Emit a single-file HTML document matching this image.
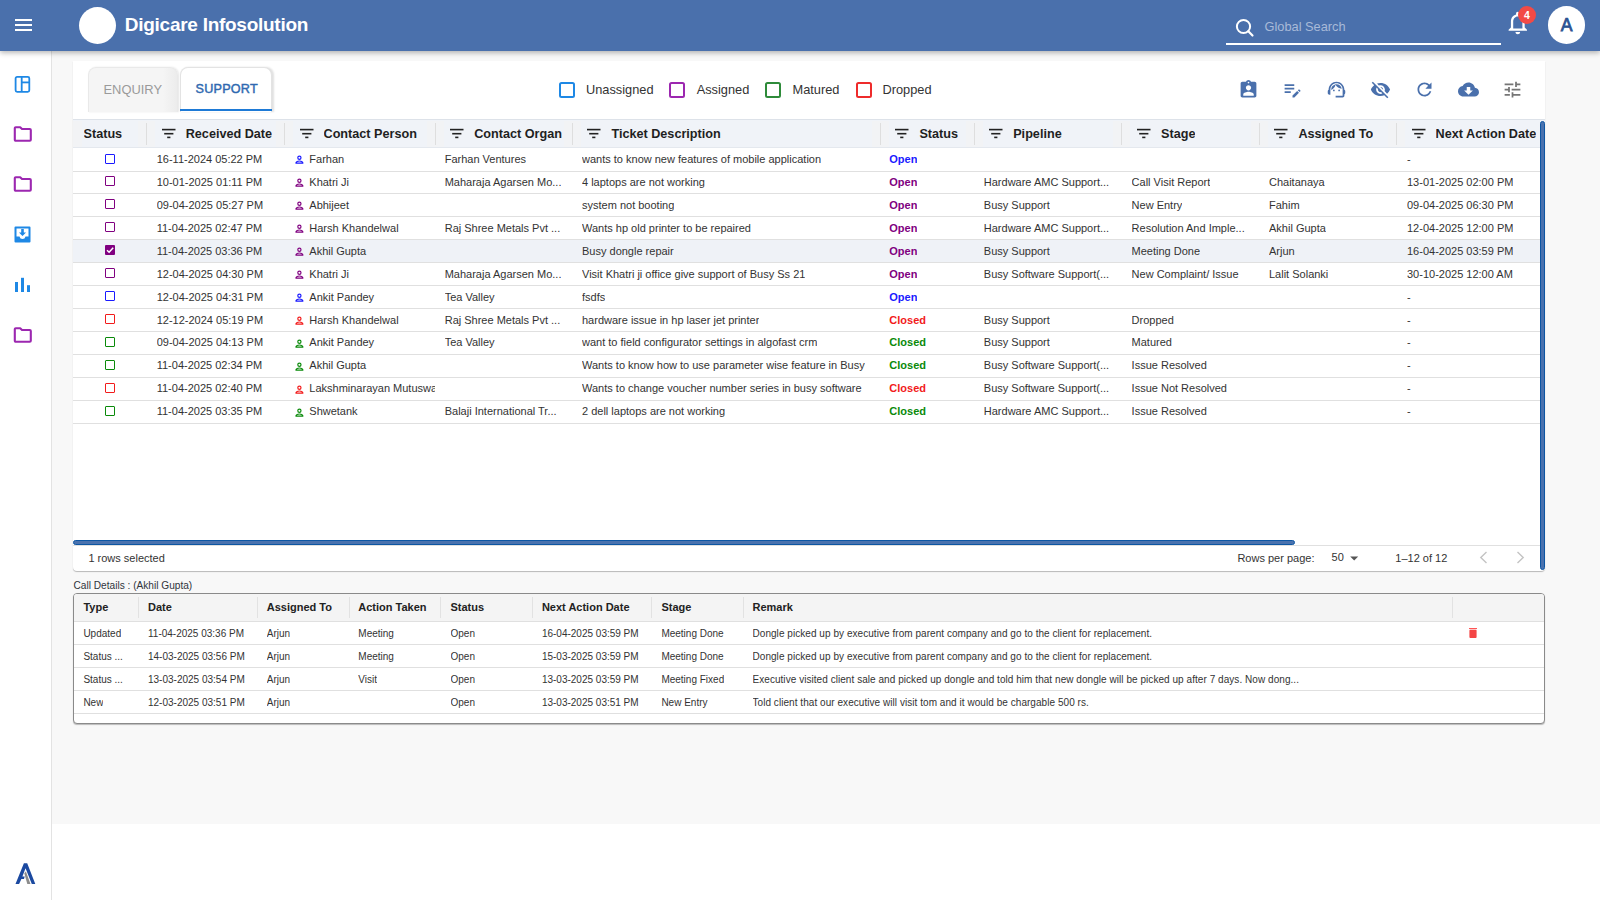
<!DOCTYPE html>
<html><head><meta charset="utf-8"><style>
*{box-sizing:border-box;margin:0;padding:0}
html,body{width:1600px;height:900px;overflow:hidden;background:#fff;font-family:"Liberation Sans",sans-serif;color:#333}
.a{position:absolute}
#hdr{position:absolute;left:0;top:0;width:1600px;height:51px;background:#4a70ac;box-shadow:0 2px 5px rgba(0,0,0,.28);z-index:10}
#side{position:absolute;left:0;top:0;width:52px;height:900px;background:#fff;border-right:1px solid #e3e3e3;z-index:5}
#main{position:absolute;left:52px;top:50px;width:1548px;height:773.5px;background:#f8f8f8}
#panel{position:absolute;left:73px;top:61px;width:1472px;height:510px;background:#fff;border-radius:0 0 4px 4px;box-shadow:0 1px 1px rgba(0,0,0,.26)}
.c{position:absolute;white-space:nowrap;overflow:hidden;font-size:11px;color:#333;line-height:23px;height:23px}
.h{position:absolute;white-space:nowrap;overflow:hidden;font-size:12.65px;font-weight:700;color:#1f1f1f;line-height:28px;height:28px;top:0}
.row{position:absolute;left:0;width:1468px;height:23px;border-bottom:1px solid #e0e0e0}
.dc{position:absolute;white-space:nowrap;overflow:hidden;font-size:10px;color:#333;line-height:23px;height:23px}
.dh{position:absolute;white-space:nowrap;font-size:11px;font-weight:700;color:#222;line-height:27px;top:0}
.drow{position:absolute;left:0;width:1470px;height:23px;border-bottom:1px solid #e0e0e0}
</style></head><body>
<div id="main"></div>
<div id="side"><svg class="a" style="left:13px;top:75px" width="18" height="18" viewBox="0 0 18 18"><rect x="2.6" y="1.9" width="13.7" height="14.9" rx="1.5" fill="none" stroke="#1e88e5" stroke-width="1.8"/><line x1="8.7" y1="1.9" x2="8.7" y2="16.8" stroke="#1e88e5" stroke-width="1.8"/><line x1="8.7" y1="7.4" x2="16.3" y2="7.4" stroke="#1e88e5" stroke-width="1.8"/></svg><svg class="a" style="left:13px;top:126px" width="20" height="16" viewBox="0 0 20 16"><path d="M1.8 2.2 Q1.8 1.2 2.8 1.2 H7.2 L9 3 H16.8 Q17.8 3 17.8 4 V13.8 Q17.8 14.8 16.8 14.8 H2.8 Q1.8 14.8 1.8 13.8 Z" fill="none" stroke="#9c27b0" stroke-width="2.1" stroke-linejoin="round"/></svg><svg class="a" style="left:13px;top:176px" width="20" height="16" viewBox="0 0 20 16"><path d="M1.8 2.2 Q1.8 1.2 2.8 1.2 H7.2 L9 3 H16.8 Q17.8 3 17.8 4 V13.8 Q17.8 14.8 16.8 14.8 H2.8 Q1.8 14.8 1.8 13.8 Z" fill="none" stroke="#9c27b0" stroke-width="2.1" stroke-linejoin="round"/></svg><svg class="a" style="left:14px;top:226px" width="17" height="17" viewBox="0 0 17 17"><path d="M1.5 0.5 H15.5 Q16.5 0.5 16.5 1.5 V15.5 Q16.5 16.5 15.5 16.5 H1.5 Q0.5 16.5 0.5 15.5 V1.5 Q0.5 0.5 1.5 0.5 Z M2.5 2.5 V10.5 H5.5 Q6 13 8.5 13 Q11 13 11.5 10.5 H14.5 V2.5 Z" fill="#1e88e5" fill-rule="evenodd"/><path d="M7.2 3 H9.8 V6.5 H12 L8.5 10 L5 6.5 H7.2 Z" fill="#1e88e5"/></svg><svg class="a" style="left:14px;top:277px" width="17" height="16" viewBox="0 0 17 16"><rect x="1" y="5" width="3" height="10" fill="#1e88e5"/><rect x="7" y="0.8" width="3" height="14.2" fill="#1e88e5"/><rect x="13" y="8.2" width="3" height="6.8" fill="#1e88e5"/></svg><svg class="a" style="left:13px;top:327px" width="20" height="16" viewBox="0 0 20 16"><path d="M1.8 2.2 Q1.8 1.2 2.8 1.2 H7.2 L9 3 H16.8 Q17.8 3 17.8 4 V13.8 Q17.8 14.8 16.8 14.8 H2.8 Q1.8 14.8 1.8 13.8 Z" fill="none" stroke="#9c27b0" stroke-width="2.1" stroke-linejoin="round"/></svg><svg class="a" style="left:14px;top:862px" width="23" height="23" viewBox="0 0 23 23"><path d="M1.5 22 L9.9 1.3 H13.2 L21.3 22 H17.8 L11.55 6.2 L8.4 14.4 H10.7 L10 16.9 H7.4 L5.1 22 Z" fill="#1b49a0"/><path d="M10.3 11.2 L11.9 9.4 L16.5 22 H13.3 Z" fill="#8c8c8c"/></svg></div>
<div id="hdr"><div class="a" style="left:15px;top:19px;width:17px;height:2px;background:#fff"></div><div class="a" style="left:15px;top:23.5px;width:17px;height:2px;background:#fff"></div><div class="a" style="left:15px;top:28.5px;width:17px;height:2px;background:#fff"></div><div class="a" style="left:78.5px;top:6.5px;width:37px;height:37px;border-radius:50%;background:#fff"></div><div class="a" style="left:124.8px;top:14.3px;font-size:19px;letter-spacing:-0.27px;font-weight:700;color:#fff;line-height:22px;white-space:nowrap">Digicare Infosolution</div><svg class="a" style="left:1234px;top:17px" width="21" height="21" viewBox="0 0 21 21"><circle cx="9.5" cy="9.5" r="6.6" fill="none" stroke="#fff" stroke-width="2"/><line x1="14.3" y1="14.3" x2="18.5" y2="18.5" stroke="#fff" stroke-width="2.2" stroke-linecap="round"/></svg><div class="a" style="left:1264.5px;top:18.7px;font-size:12.8px;color:#a8bad8;line-height:16px;white-space:nowrap">Global Search</div><div class="a" style="left:1226px;top:43px;width:275px;height:2px;background:#fff"></div><svg class="a" style="left:1503.6px;top:8.6px" width="27.6" height="27.6" viewBox="0 0 24 24"><path d="M12 22c1.1 0 2-.9 2-2h-4c0 1.1.9 2 2 2zm6-6v-5c0-3.07-1.63-5.64-4.5-6.32V4c0-.83-.67-1.5-1.5-1.5s-1.5.67-1.5 1.5v.68C7.64 5.36 6 7.92 6 11v5l-2 2v1h16v-1l-2-2zm-2 1H8v-6c0-2.48 1.51-4.5 4-4.5s4 2.02 4 4.5v6z" fill="#fff"/></svg><div class="a" style="left:1517.9px;top:6.3px;width:18px;height:18px;border-radius:50%;background:#f24a46;color:#fff;font-size:10.5px;font-weight:700;text-align:center;line-height:18px">4</div><div class="a" style="left:1547.9px;top:6px;width:37.5px;height:37.5px;border-radius:50%;background:#fff"></div><div class="a" style="left:1547.9px;top:14.6px;width:37.5px;font-size:17.6px;font-weight:400;-webkit-text-stroke:0.75px #2c5292;color:#2c5292;text-align:center;line-height:20px">A</div></div>
<div id="panel"><div class="a" style="left:15px;top:6px;width:90px;height:45px;background:linear-gradient(to right,#f5f5f5 0,#f5f5f5 84%,#ececec 100%);border:1px solid #e9e9e9;border-bottom:none;border-radius:8px 8px 0 0;box-shadow:1px 0 2px rgba(0,0,0,.10)"></div><div class="a" style="left:30.5px;top:21px;font-size:12.9px;color:#9a9a9a;line-height:16px;white-space:nowrap">ENQUIRY</div><div class="a" style="left:106.5px;top:6px;width:92px;height:45px;background:#fff;border:1px solid #e3e3e3;border-bottom:none;border-radius:8px 8px 0 0;box-shadow:1.5px 0 2px rgba(0,0,0,.12)"></div><div class="a" style="left:106.5px;top:48px;width:92px;height:2px;background:#1e7ad6"></div><div class="a" style="left:122.5px;top:20px;font-size:12.6px;font-weight:400;-webkit-text-stroke:0.45px #2f69b0;color:#2f69b0;line-height:16px;white-space:nowrap;letter-spacing:0.25px">SUPPORT</div><div class="a" style="left:485.5px;top:20.8px;width:16px;height:16px;border:2px solid #1e88e5;border-radius:2.5px"></div><div class="a" style="left:513px;top:21px;font-size:12.8px;color:#333;line-height:16px;white-space:nowrap">Unassigned</div><div class="a" style="left:596px;top:20.8px;width:16px;height:16px;border:2px solid #9c27b0;border-radius:2.5px"></div><div class="a" style="left:623.7px;top:21px;font-size:12.8px;color:#333;line-height:16px;white-space:nowrap">Assigned</div><div class="a" style="left:692px;top:20.8px;width:16px;height:16px;border:2px solid #2e8b3a;border-radius:2.5px"></div><div class="a" style="left:719.5px;top:21px;font-size:12.8px;color:#333;line-height:16px;white-space:nowrap">Matured</div><div class="a" style="left:782.5px;top:20.8px;width:16px;height:16px;border:2px solid #ee2b2b;border-radius:2.5px"></div><div class="a" style="left:809.5px;top:21px;font-size:12.8px;color:#333;line-height:16px;white-space:nowrap">Dropped</div><svg class="a" style="left:1164.5px;top:17.799999999999997px" width="21" height="21" viewBox="0 0 24 24"><path d="M19 3h-4.18C14.4 1.84 13.3 1 12 1c-1.3 0-2.4.84-2.82 2H5c-1.1 0-2 .9-2 2v14c0 1.1.9 2 2 2h14c1.1 0 2-.9 2-2V5c0-1.1-.9-2-2-2zm-7 0c.55 0 1 .45 1 1s-.45 1-1 1-1-.45-1-1 .45-1 1-1zm0 4c1.66 0 3 1.34 3 3s-1.34 3-3 3-3-1.34-3-3 1.34-3 3-3zm6 12H6v-1.4c0-2 4-3.1 6-3.1s6 1.1 6 3.1V19z" fill="#4a70ac"/></svg><svg class="a" style="left:1208.5px;top:17.799999999999997px" width="21" height="21" viewBox="0 0 24 24"><path d="M3 10h11v2H3v-2zm0-2h11V6H3v2zm0 8h7v-2H3v2zm15.01-3.13.71-.71c.39-.39 1.02-.39 1.41 0l.71.71c.39.39.39 1.02 0 1.41l-.71.71-2.12-2.12zm-.71.71-5.3 5.3V21h2.12l5.3-5.3-2.12-2.12z" fill="#4a70ac"/></svg><svg class="a" style="left:1252.5px;top:17.799999999999997px" width="21" height="21" viewBox="0 0 24 24"><path d="M21 12.22C21 6.73 16.74 3 12 3c-4.69 0-9 3.65-9 9.28-.6.34-1 .98-1 1.72v2c0 1.1.9 2 2 2h1v-6.1c0-3.87 3.13-7 7-7s7 3.13 7 7V19h-8v2h8c1.1 0 2-.9 2-2v-1.22c.59-.31 1-.92 1-1.64v-2.3c0-.7-.41-1.31-1-1.62zM9 14a1 1 0 1 0 0-2 1 1 0 0 0 0 2zm6 0a1 1 0 1 0 0-2 1 1 0 0 0 0 2zM18 11.03C17.52 8.18 15.04 6 12.05 6c-3.03 0-6.29 2.51-6.03 6.45 2.47-1.01 4.33-3.21 4.86-5.89 1.31 2.63 4 4.44 7.12 4.47z" fill="#4a70ac"/></svg><svg class="a" style="left:1296.5px;top:17.799999999999997px" width="21" height="21" viewBox="0 0 24 24"><path d="M12 7c2.76 0 5 2.24 5 5 0 .65-.13 1.26-.36 1.83l2.92 2.92c1.51-1.26 2.7-2.89 3.43-4.75-1.73-4.39-6-7.5-11-7.5-1.4 0-2.74.25-3.98.7l2.16 2.16C10.74 7.13 11.35 7 12 7zM2 4.27l2.28 2.28.46.46C3.08 8.3 1.78 10.02 1 12c1.73 4.39 6 7.5 11 7.5 1.55 0 3.03-.3 4.38-.84l.42.42L19.73 22 21 20.73 3.27 3 2 4.27zM7.53 9.8l1.55 1.55c-.05.21-.08.43-.08.65 0 1.66 1.34 3 3 3 .22 0 .44-.03.65-.08l1.55 1.55c-.67.33-1.41.53-2.2.53-2.76 0-5-2.24-5-5 0-.79.2-1.53.53-2.2zm4.31-.78l3.15 3.15.02-.16c0-1.66-1.34-3-3-3l-.17.01z" fill="#4a70ac"/></svg><svg class="a" style="left:1340.5px;top:17.799999999999997px" width="21" height="21" viewBox="0 0 24 24"><path d="M17.65 6.35C16.2 4.9 14.21 4 12 4c-4.42 0-7.99 3.58-7.99 8s3.57 8 7.99 8c3.73 0 6.84-2.55 7.73-6h-2.08c-.82 2.33-3.04 4-5.65 4-3.31 0-6-2.69-6-6s2.69-6 6-6c1.66 0 3.14.69 4.22 1.78L13 11h7V4l-2.35 2.35z" fill="#4a70ac"/></svg><svg class="a" style="left:1384.5px;top:17.799999999999997px" width="21" height="21" viewBox="0 0 24 24"><path d="M19.35 10.04C18.67 6.59 15.64 4 12 4 9.11 4 6.6 5.64 5.35 8.04 2.34 8.36 0 10.91 0 14c0 3.31 2.69 6 6 6h13c2.76 0 5-2.24 5-5 0-2.64-2.05-4.78-4.65-4.96zM17 13l-5 5-5-5h3V9h4v4h3z" fill="#4a70ac"/></svg><svg class="a" style="left:1428.5px;top:17.799999999999997px" width="21" height="21" viewBox="0 0 24 24"><path d="M3 17v2h6v-2H3zM3 5v2h10V5H3zm10 16v-2h8v-2h-8v-2h-2v6h2zM7 9v2H3v2h4v2h2V9H7zm14 4v-2H11v2h10zm-6-4h2V7h4V5h-4V3h-2v6z" fill="#757575"/></svg><div class="a" style="left:0;top:58px;width:1472px;height:28.5px;background:#f0f3f8;border-top:1.5px solid #dde2e9;border-bottom:1px solid #e4e8ee"></div><div class="a" style="left:0;top:59.5px;width:9px;height:26px;background:#f2f3f5"></div><div class="a" style="left:65.0px;top:59.5px;width:17px;height:26px;background:#f2f3f5"></div><div class="a" style="left:73.0px;top:62px;width:1px;height:22px;background:#dedede"></div><div class="a" style="left:202.8px;top:59.5px;width:17px;height:26px;background:#f2f3f5"></div><div class="a" style="left:210.8px;top:62px;width:1px;height:22px;background:#dedede"></div><div class="a" style="left:353.5px;top:59.5px;width:17px;height:26px;background:#f2f3f5"></div><div class="a" style="left:361.5px;top:62px;width:1px;height:22px;background:#dedede"></div><div class="a" style="left:490.70000000000005px;top:59.5px;width:17px;height:26px;background:#f2f3f5"></div><div class="a" style="left:498.70000000000005px;top:62px;width:1px;height:22px;background:#dedede"></div><div class="a" style="left:798.7px;top:59.5px;width:17px;height:26px;background:#f2f3f5"></div><div class="a" style="left:806.7px;top:62px;width:1px;height:22px;background:#dedede"></div><div class="a" style="left:892.5px;top:59.5px;width:17px;height:26px;background:#f2f3f5"></div><div class="a" style="left:900.5px;top:62px;width:1px;height:22px;background:#dedede"></div><div class="a" style="left:1040.3px;top:59.5px;width:17px;height:26px;background:#f2f3f5"></div><div class="a" style="left:1048.3px;top:62px;width:1px;height:22px;background:#dedede"></div><div class="a" style="left:1177.7px;top:59.5px;width:17px;height:26px;background:#f2f3f5"></div><div class="a" style="left:1185.7px;top:62px;width:1px;height:22px;background:#dedede"></div><div class="a" style="left:1314.9px;top:59.5px;width:17px;height:26px;background:#f2f3f5"></div><div class="a" style="left:1322.9px;top:62px;width:1px;height:22px;background:#dedede"></div><div class="h" style="left:10.5px;top:59px">Status</div><svg class="a" style="left:88.7px;top:67px" width="14" height="11" viewBox="0 0 14 11"><rect x="0" y="0.8" width="13.5" height="1.6" fill="#222"/><rect x="2.2" y="4.9" width="9.2" height="1.6" fill="#222"/><rect x="5.2" y="8.6" width="3.2" height="1.6" fill="#222"/></svg><div class="h" style="left:112.7px;top:59px">Received Date</div><svg class="a" style="left:226.5px;top:67px" width="14" height="11" viewBox="0 0 14 11"><rect x="0" y="0.8" width="13.5" height="1.6" fill="#222"/><rect x="2.2" y="4.9" width="9.2" height="1.6" fill="#222"/><rect x="5.2" y="8.6" width="3.2" height="1.6" fill="#222"/></svg><div class="h" style="left:250.5px;top:59px">Contact Person</div><svg class="a" style="left:377.2px;top:67px" width="14" height="11" viewBox="0 0 14 11"><rect x="0" y="0.8" width="13.5" height="1.6" fill="#222"/><rect x="2.2" y="4.9" width="9.2" height="1.6" fill="#222"/><rect x="5.2" y="8.6" width="3.2" height="1.6" fill="#222"/></svg><div class="h" style="left:401.2px;top:59px">Contact Organ</div><svg class="a" style="left:514.4000000000001px;top:67px" width="14" height="11" viewBox="0 0 14 11"><rect x="0" y="0.8" width="13.5" height="1.6" fill="#222"/><rect x="2.2" y="4.9" width="9.2" height="1.6" fill="#222"/><rect x="5.2" y="8.6" width="3.2" height="1.6" fill="#222"/></svg><div class="h" style="left:538.4000000000001px;top:59px">Ticket Description</div><svg class="a" style="left:822.4000000000001px;top:67px" width="14" height="11" viewBox="0 0 14 11"><rect x="0" y="0.8" width="13.5" height="1.6" fill="#222"/><rect x="2.2" y="4.9" width="9.2" height="1.6" fill="#222"/><rect x="5.2" y="8.6" width="3.2" height="1.6" fill="#222"/></svg><div class="h" style="left:846.4000000000001px;top:59px">Status</div><svg class="a" style="left:916.2px;top:67px" width="14" height="11" viewBox="0 0 14 11"><rect x="0" y="0.8" width="13.5" height="1.6" fill="#222"/><rect x="2.2" y="4.9" width="9.2" height="1.6" fill="#222"/><rect x="5.2" y="8.6" width="3.2" height="1.6" fill="#222"/></svg><div class="h" style="left:940.2px;top:59px">Pipeline</div><svg class="a" style="left:1064.0px;top:67px" width="14" height="11" viewBox="0 0 14 11"><rect x="0" y="0.8" width="13.5" height="1.6" fill="#222"/><rect x="2.2" y="4.9" width="9.2" height="1.6" fill="#222"/><rect x="5.2" y="8.6" width="3.2" height="1.6" fill="#222"/></svg><div class="h" style="left:1088.0px;top:59px">Stage</div><svg class="a" style="left:1201.4px;top:67px" width="14" height="11" viewBox="0 0 14 11"><rect x="0" y="0.8" width="13.5" height="1.6" fill="#222"/><rect x="2.2" y="4.9" width="9.2" height="1.6" fill="#222"/><rect x="5.2" y="8.6" width="3.2" height="1.6" fill="#222"/></svg><div class="h" style="left:1225.4px;top:59px">Assigned To</div><svg class="a" style="left:1338.6000000000001px;top:67px" width="14" height="11" viewBox="0 0 14 11"><rect x="0" y="0.8" width="13.5" height="1.6" fill="#222"/><rect x="2.2" y="4.9" width="9.2" height="1.6" fill="#222"/><rect x="5.2" y="8.6" width="3.2" height="1.6" fill="#222"/></svg><div class="h" style="left:1362.6000000000001px;top:59px">Next Action Date</div><div class="row" style="top:87.00px;height:23.5px;width:1467px;background:transparent"></div><div class="a" style="left:32px;top:92.50px;width:10px;height:10px;border:1.5px solid #1a1aff;border-radius:1px"></div><div class="c" style="left:83.7px;top:87.00px">16-11-2024 05:22 PM</div><svg class="a" style="left:221.60000000000002px;top:94.30px" width="9" height="9" viewBox="0 0 9 9"><circle cx="4.4" cy="2.7" r="1.6" fill="none" stroke="#1a1aff" stroke-width="1.2"/><path d="M0.9 8.1 Q1.2 6.0 4.4 6.0 Q7.6 6.0 7.9 8.1 Z" fill="none" stroke="#1a1aff" stroke-width="1.2" stroke-linejoin="round"/></svg><div class="c" style="left:236.3px;top:87.00px;width:125.69999999999999px;text-overflow:clip">Farhan</div><div class="c" style="left:371.7px;top:87.00px">Farhan Ventures</div><div class="c" style="left:509.00000000000006px;top:87.00px">wants to know new features of mobile application</div><div class="c" style="left:816.3000000000001px;top:87.00px;font-weight:700;color:#1a1aff">Open</div><div class="c" style="left:910.8px;top:87.00px"></div><div class="c" style="left:1058.6px;top:87.00px"></div><div class="c" style="left:1196.0px;top:87.00px"></div><div class="c" style="left:1334.0px;top:87.00px">-</div><div class="row" style="top:109.93px;height:23.5px;width:1467px;background:transparent"></div><div class="a" style="left:32px;top:115.43px;width:10px;height:10px;border:1.5px solid #800080;border-radius:1px"></div><div class="c" style="left:83.7px;top:109.93px">10-01-2025 01:11 PM</div><svg class="a" style="left:221.60000000000002px;top:117.23px" width="9" height="9" viewBox="0 0 9 9"><circle cx="4.4" cy="2.7" r="1.6" fill="none" stroke="#800080" stroke-width="1.2"/><path d="M0.9 8.1 Q1.2 6.0 4.4 6.0 Q7.6 6.0 7.9 8.1 Z" fill="none" stroke="#800080" stroke-width="1.2" stroke-linejoin="round"/></svg><div class="c" style="left:236.3px;top:109.93px;width:125.69999999999999px;text-overflow:clip">Khatri Ji</div><div class="c" style="left:371.7px;top:109.93px">Maharaja Agarsen Mo...</div><div class="c" style="left:509.00000000000006px;top:109.93px">4 laptops are not working</div><div class="c" style="left:816.3000000000001px;top:109.93px;font-weight:700;color:#800080">Open</div><div class="c" style="left:910.8px;top:109.93px">Hardware AMC Support...</div><div class="c" style="left:1058.6px;top:109.93px">Call Visit Report</div><div class="c" style="left:1196.0px;top:109.93px">Chaitanaya</div><div class="c" style="left:1334.0px;top:109.93px">13-01-2025 02:00 PM</div><div class="row" style="top:132.86px;height:23.5px;width:1467px;background:transparent"></div><div class="a" style="left:32px;top:138.36px;width:10px;height:10px;border:1.5px solid #800080;border-radius:1px"></div><div class="c" style="left:83.7px;top:132.86px">09-04-2025 05:27 PM</div><svg class="a" style="left:221.60000000000002px;top:140.16px" width="9" height="9" viewBox="0 0 9 9"><circle cx="4.4" cy="2.7" r="1.6" fill="none" stroke="#800080" stroke-width="1.2"/><path d="M0.9 8.1 Q1.2 6.0 4.4 6.0 Q7.6 6.0 7.9 8.1 Z" fill="none" stroke="#800080" stroke-width="1.2" stroke-linejoin="round"/></svg><div class="c" style="left:236.3px;top:132.86px;width:125.69999999999999px;text-overflow:clip">Abhijeet</div><div class="c" style="left:371.7px;top:132.86px"></div><div class="c" style="left:509.00000000000006px;top:132.86px">system not booting</div><div class="c" style="left:816.3000000000001px;top:132.86px;font-weight:700;color:#800080">Open</div><div class="c" style="left:910.8px;top:132.86px">Busy Support</div><div class="c" style="left:1058.6px;top:132.86px">New Entry</div><div class="c" style="left:1196.0px;top:132.86px">Fahim</div><div class="c" style="left:1334.0px;top:132.86px">09-04-2025 06:30 PM</div><div class="row" style="top:155.79px;height:23.5px;width:1467px;background:transparent"></div><div class="a" style="left:32px;top:161.29px;width:10px;height:10px;border:1.5px solid #800080;border-radius:1px"></div><div class="c" style="left:83.7px;top:155.79px">11-04-2025 02:47 PM</div><svg class="a" style="left:221.60000000000002px;top:163.09px" width="9" height="9" viewBox="0 0 9 9"><circle cx="4.4" cy="2.7" r="1.6" fill="none" stroke="#800080" stroke-width="1.2"/><path d="M0.9 8.1 Q1.2 6.0 4.4 6.0 Q7.6 6.0 7.9 8.1 Z" fill="none" stroke="#800080" stroke-width="1.2" stroke-linejoin="round"/></svg><div class="c" style="left:236.3px;top:155.79px;width:125.69999999999999px;text-overflow:clip">Harsh Khandelwal</div><div class="c" style="left:371.7px;top:155.79px">Raj Shree Metals Pvt ...</div><div class="c" style="left:509.00000000000006px;top:155.79px">Wants hp old printer to be repaired</div><div class="c" style="left:816.3000000000001px;top:155.79px;font-weight:700;color:#800080">Open</div><div class="c" style="left:910.8px;top:155.79px">Hardware AMC Support...</div><div class="c" style="left:1058.6px;top:155.79px">Resolution And Imple...</div><div class="c" style="left:1196.0px;top:155.79px">Akhil Gupta</div><div class="c" style="left:1334.0px;top:155.79px">12-04-2025 12:00 PM</div><div class="row" style="top:178.72px;height:23.5px;width:1467px;background:#eff2f7"></div><svg class="a" style="left:32px;top:184.22px" width="10" height="10" viewBox="0 0 10 10"><rect x="0" y="0" width="10" height="10" rx="1" fill="#800080"/><path d="M2 5.2 L4.1 7.2 L8.2 2.8" fill="none" stroke="#fff" stroke-width="1.5"/></svg><div class="c" style="left:83.7px;top:178.72px">11-04-2025 03:36 PM</div><svg class="a" style="left:221.60000000000002px;top:186.02px" width="9" height="9" viewBox="0 0 9 9"><circle cx="4.4" cy="2.7" r="1.6" fill="none" stroke="#800080" stroke-width="1.2"/><path d="M0.9 8.1 Q1.2 6.0 4.4 6.0 Q7.6 6.0 7.9 8.1 Z" fill="none" stroke="#800080" stroke-width="1.2" stroke-linejoin="round"/></svg><div class="c" style="left:236.3px;top:178.72px;width:125.69999999999999px;text-overflow:clip">Akhil Gupta</div><div class="c" style="left:371.7px;top:178.72px"></div><div class="c" style="left:509.00000000000006px;top:178.72px">Busy dongle repair</div><div class="c" style="left:816.3000000000001px;top:178.72px;font-weight:700;color:#800080">Open</div><div class="c" style="left:910.8px;top:178.72px">Busy Support</div><div class="c" style="left:1058.6px;top:178.72px">Meeting Done</div><div class="c" style="left:1196.0px;top:178.72px">Arjun</div><div class="c" style="left:1334.0px;top:178.72px">16-04-2025 03:59 PM</div><div class="row" style="top:201.65px;height:23.5px;width:1467px;background:transparent"></div><div class="a" style="left:32px;top:207.15px;width:10px;height:10px;border:1.5px solid #800080;border-radius:1px"></div><div class="c" style="left:83.7px;top:201.65px">12-04-2025 04:30 PM</div><svg class="a" style="left:221.60000000000002px;top:208.95px" width="9" height="9" viewBox="0 0 9 9"><circle cx="4.4" cy="2.7" r="1.6" fill="none" stroke="#800080" stroke-width="1.2"/><path d="M0.9 8.1 Q1.2 6.0 4.4 6.0 Q7.6 6.0 7.9 8.1 Z" fill="none" stroke="#800080" stroke-width="1.2" stroke-linejoin="round"/></svg><div class="c" style="left:236.3px;top:201.65px;width:125.69999999999999px;text-overflow:clip">Khatri Ji</div><div class="c" style="left:371.7px;top:201.65px">Maharaja Agarsen Mo...</div><div class="c" style="left:509.00000000000006px;top:201.65px">Visit Khatri ji office give support of Busy Ss 21</div><div class="c" style="left:816.3000000000001px;top:201.65px;font-weight:700;color:#800080">Open</div><div class="c" style="left:910.8px;top:201.65px">Busy Software Support(...</div><div class="c" style="left:1058.6px;top:201.65px">New Complaint/ Issue</div><div class="c" style="left:1196.0px;top:201.65px">Lalit Solanki</div><div class="c" style="left:1334.0px;top:201.65px">30-10-2025 12:00 AM</div><div class="row" style="top:224.58px;height:23.5px;width:1467px;background:transparent"></div><div class="a" style="left:32px;top:230.08px;width:10px;height:10px;border:1.5px solid #1a1aff;border-radius:1px"></div><div class="c" style="left:83.7px;top:224.58px">12-04-2025 04:31 PM</div><svg class="a" style="left:221.60000000000002px;top:231.88px" width="9" height="9" viewBox="0 0 9 9"><circle cx="4.4" cy="2.7" r="1.6" fill="none" stroke="#1a1aff" stroke-width="1.2"/><path d="M0.9 8.1 Q1.2 6.0 4.4 6.0 Q7.6 6.0 7.9 8.1 Z" fill="none" stroke="#1a1aff" stroke-width="1.2" stroke-linejoin="round"/></svg><div class="c" style="left:236.3px;top:224.58px;width:125.69999999999999px;text-overflow:clip">Ankit Pandey</div><div class="c" style="left:371.7px;top:224.58px">Tea Valley</div><div class="c" style="left:509.00000000000006px;top:224.58px">fsdfs</div><div class="c" style="left:816.3000000000001px;top:224.58px;font-weight:700;color:#1a1aff">Open</div><div class="c" style="left:910.8px;top:224.58px"></div><div class="c" style="left:1058.6px;top:224.58px"></div><div class="c" style="left:1196.0px;top:224.58px"></div><div class="c" style="left:1334.0px;top:224.58px">-</div><div class="row" style="top:247.51px;height:23.5px;width:1467px;background:transparent"></div><div class="a" style="left:32px;top:253.01px;width:10px;height:10px;border:1.5px solid #f21b1b;border-radius:1px"></div><div class="c" style="left:83.7px;top:247.51px">12-12-2024 05:19 PM</div><svg class="a" style="left:221.60000000000002px;top:254.81px" width="9" height="9" viewBox="0 0 9 9"><circle cx="4.4" cy="2.7" r="1.6" fill="none" stroke="#f21b1b" stroke-width="1.2"/><path d="M0.9 8.1 Q1.2 6.0 4.4 6.0 Q7.6 6.0 7.9 8.1 Z" fill="none" stroke="#f21b1b" stroke-width="1.2" stroke-linejoin="round"/></svg><div class="c" style="left:236.3px;top:247.51px;width:125.69999999999999px;text-overflow:clip">Harsh Khandelwal</div><div class="c" style="left:371.7px;top:247.51px">Raj Shree Metals Pvt ...</div><div class="c" style="left:509.00000000000006px;top:247.51px">hardware issue in hp laser jet printer</div><div class="c" style="left:816.3000000000001px;top:247.51px;font-weight:700;color:#f21b1b">Closed</div><div class="c" style="left:910.8px;top:247.51px">Busy Support</div><div class="c" style="left:1058.6px;top:247.51px">Dropped</div><div class="c" style="left:1196.0px;top:247.51px"></div><div class="c" style="left:1334.0px;top:247.51px">-</div><div class="row" style="top:270.44px;height:23.5px;width:1467px;background:transparent"></div><div class="a" style="left:32px;top:275.94px;width:10px;height:10px;border:1.5px solid #0a8a0a;border-radius:1px"></div><div class="c" style="left:83.7px;top:270.44px">09-04-2025 04:13 PM</div><svg class="a" style="left:221.60000000000002px;top:277.74px" width="9" height="9" viewBox="0 0 9 9"><circle cx="4.4" cy="2.7" r="1.6" fill="none" stroke="#0a8a0a" stroke-width="1.2"/><path d="M0.9 8.1 Q1.2 6.0 4.4 6.0 Q7.6 6.0 7.9 8.1 Z" fill="none" stroke="#0a8a0a" stroke-width="1.2" stroke-linejoin="round"/></svg><div class="c" style="left:236.3px;top:270.44px;width:125.69999999999999px;text-overflow:clip">Ankit Pandey</div><div class="c" style="left:371.7px;top:270.44px">Tea Valley</div><div class="c" style="left:509.00000000000006px;top:270.44px">want to field configurator settings in algofast crm</div><div class="c" style="left:816.3000000000001px;top:270.44px;font-weight:700;color:#0a8a0a">Closed</div><div class="c" style="left:910.8px;top:270.44px">Busy Support</div><div class="c" style="left:1058.6px;top:270.44px">Matured</div><div class="c" style="left:1196.0px;top:270.44px"></div><div class="c" style="left:1334.0px;top:270.44px">-</div><div class="row" style="top:293.37px;height:23.5px;width:1467px;background:transparent"></div><div class="a" style="left:32px;top:298.87px;width:10px;height:10px;border:1.5px solid #0a8a0a;border-radius:1px"></div><div class="c" style="left:83.7px;top:293.37px">11-04-2025 02:34 PM</div><svg class="a" style="left:221.60000000000002px;top:300.67px" width="9" height="9" viewBox="0 0 9 9"><circle cx="4.4" cy="2.7" r="1.6" fill="none" stroke="#0a8a0a" stroke-width="1.2"/><path d="M0.9 8.1 Q1.2 6.0 4.4 6.0 Q7.6 6.0 7.9 8.1 Z" fill="none" stroke="#0a8a0a" stroke-width="1.2" stroke-linejoin="round"/></svg><div class="c" style="left:236.3px;top:293.37px;width:125.69999999999999px;text-overflow:clip">Akhil Gupta</div><div class="c" style="left:371.7px;top:293.37px"></div><div class="c" style="left:509.00000000000006px;top:293.37px">Wants to know how to use parameter wise feature in Busy</div><div class="c" style="left:816.3000000000001px;top:293.37px;font-weight:700;color:#0a8a0a">Closed</div><div class="c" style="left:910.8px;top:293.37px">Busy Software Support(...</div><div class="c" style="left:1058.6px;top:293.37px">Issue Resolved</div><div class="c" style="left:1196.0px;top:293.37px"></div><div class="c" style="left:1334.0px;top:293.37px">-</div><div class="row" style="top:316.30px;height:23.5px;width:1467px;background:transparent"></div><div class="a" style="left:32px;top:321.80px;width:10px;height:10px;border:1.5px solid #f21b1b;border-radius:1px"></div><div class="c" style="left:83.7px;top:316.30px">11-04-2025 02:40 PM</div><svg class="a" style="left:221.60000000000002px;top:323.60px" width="9" height="9" viewBox="0 0 9 9"><circle cx="4.4" cy="2.7" r="1.6" fill="none" stroke="#f21b1b" stroke-width="1.2"/><path d="M0.9 8.1 Q1.2 6.0 4.4 6.0 Q7.6 6.0 7.9 8.1 Z" fill="none" stroke="#f21b1b" stroke-width="1.2" stroke-linejoin="round"/></svg><div class="c" style="left:236.3px;top:316.30px;width:125.69999999999999px;text-overflow:clip">Lakshminarayan Mutuswamy</div><div class="c" style="left:371.7px;top:316.30px"></div><div class="c" style="left:509.00000000000006px;top:316.30px">Wants to change voucher number series in busy software</div><div class="c" style="left:816.3000000000001px;top:316.30px;font-weight:700;color:#f21b1b">Closed</div><div class="c" style="left:910.8px;top:316.30px">Busy Software Support(...</div><div class="c" style="left:1058.6px;top:316.30px">Issue Not Resolved</div><div class="c" style="left:1196.0px;top:316.30px"></div><div class="c" style="left:1334.0px;top:316.30px">-</div><div class="row" style="top:339.23px;height:23.5px;width:1467px;background:transparent"></div><div class="a" style="left:32px;top:344.73px;width:10px;height:10px;border:1.5px solid #0a8a0a;border-radius:1px"></div><div class="c" style="left:83.7px;top:339.23px">11-04-2025 03:35 PM</div><svg class="a" style="left:221.60000000000002px;top:346.53px" width="9" height="9" viewBox="0 0 9 9"><circle cx="4.4" cy="2.7" r="1.6" fill="none" stroke="#0a8a0a" stroke-width="1.2"/><path d="M0.9 8.1 Q1.2 6.0 4.4 6.0 Q7.6 6.0 7.9 8.1 Z" fill="none" stroke="#0a8a0a" stroke-width="1.2" stroke-linejoin="round"/></svg><div class="c" style="left:236.3px;top:339.23px;width:125.69999999999999px;text-overflow:clip">Shwetank</div><div class="c" style="left:371.7px;top:339.23px">Balaji International Tr...</div><div class="c" style="left:509.00000000000006px;top:339.23px">2 dell laptops are not working</div><div class="c" style="left:816.3000000000001px;top:339.23px;font-weight:700;color:#0a8a0a">Closed</div><div class="c" style="left:910.8px;top:339.23px">Hardware AMC Support...</div><div class="c" style="left:1058.6px;top:339.23px">Issue Resolved</div><div class="c" style="left:1196.0px;top:339.23px"></div><div class="c" style="left:1334.0px;top:339.23px">-</div><div class="a" style="left:0;top:479px;width:1221.5px;height:5px;background:#4a72ae;border:1px solid #0d56a3;border-radius:3px"></div><div class="a" style="left:0;top:484px;width:1467px;height:1px;background:#e0e0e0"></div><div class="a" style="left:1467px;top:60px;width:5px;height:448.5px;background:#4a72ae;border:1px solid #0d56a3;border-radius:3px"></div><div class="a" style="left:15.4px;top:490px;font-size:11px;color:#333;line-height:14px;white-space:nowrap">1 rows selected</div><div class="a" style="left:1164.4px;top:490px;font-size:11px;color:#333;line-height:14px;white-space:nowrap">Rows per page:</div><div class="a" style="left:1258.6px;top:489px;font-size:11px;color:#333;line-height:14px;white-space:nowrap">50</div><svg class="a" style="left:1277.2px;top:494.8px" width="9" height="6" viewBox="0 0 9 6"><path d="M0.2 0.4 L8.2 0.4 L4.2 4.4 Z" fill="#555"/></svg><div class="a" style="left:1322.3px;top:490px;font-size:11px;color:#333;line-height:14px;white-space:nowrap">1–12 of 12</div><svg class="a" style="left:1406px;top:490px" width="9" height="13" viewBox="0 0 9 13"><path d="M7.5 1 L1.8 6.5 L7.5 12" fill="none" stroke="#c4c4c4" stroke-width="1.4"/></svg><svg class="a" style="left:1443px;top:490px" width="9" height="13" viewBox="0 0 9 13"><path d="M1.5 1 L7.2 6.5 L1.5 12" fill="none" stroke="#c4c4c4" stroke-width="1.4"/></svg></div>
<div class="a" style="left:73.5px;top:579.1px;font-size:10.15px;color:#30343c;line-height:13px;white-space:nowrap">Call Details : (Akhil Gupta)</div>
<div class="a" style="left:73px;top:593px;width:1472px;height:130.5px;background:#fff;border:1px solid #8a8a8a;border-radius:4px;overflow:hidden;box-shadow:0 1px 1px rgba(0,0,0,.25)"><div class="a" style="left:0;top:0;width:1470px;height:27.5px;background:#f4f4f4;border-bottom:1px solid #e0e0e0"></div><div class="a" style="left:63.900000000000006px;top:3px;width:1px;height:21px;background:#e2e2e2"></div><div class="a" style="left:182.8px;top:3px;width:1px;height:21px;background:#e2e2e2"></div><div class="a" style="left:274.8px;top:3px;width:1px;height:21px;background:#e2e2e2"></div><div class="a" style="left:366.2px;top:3px;width:1px;height:21px;background:#e2e2e2"></div><div class="a" style="left:458.1px;top:3px;width:1px;height:21px;background:#e2e2e2"></div><div class="a" style="left:577.1px;top:3px;width:1px;height:21px;background:#e2e2e2"></div><div class="a" style="left:669.0px;top:3px;width:1px;height:21px;background:#e2e2e2"></div><div class="a" style="left:1378.0px;top:3px;width:1px;height:21px;background:#e2e2e2"></div><div class="dh" style="left:9.4px;top:0">Type</div><div class="dh" style="left:74.0px;top:0">Date</div><div class="dh" style="left:192.8px;top:0">Assigned To</div><div class="dh" style="left:284.3px;top:0">Action Taken</div><div class="dh" style="left:376.5px;top:0">Status</div><div class="dh" style="left:467.90000000000003px;top:0">Next Action Date</div><div class="dh" style="left:587.4px;top:0">Stage</div><div class="dh" style="left:678.5px;top:0">Remark</div><div class="drow" style="top:27.5px;height:23px"></div><div class="dc" style="left:9.4px;top:27.5px">Updated</div><div class="dc" style="left:74.0px;top:27.5px">11-04-2025 03:36 PM</div><div class="dc" style="left:192.8px;top:27.5px">Arjun</div><div class="dc" style="left:284.3px;top:27.5px">Meeting</div><div class="dc" style="left:376.5px;top:27.5px">Open</div><div class="dc" style="left:467.90000000000003px;top:27.5px">16-04-2025 03:59 PM</div><div class="dc" style="left:587.4px;top:27.5px">Meeting Done</div><div class="dc" style="left:678.5px;top:27.5px;letter-spacing:0.05px">Dongle picked up by executive from parent company and go to the client for replacement.</div><div class="drow" style="top:50.5px;height:23px"></div><div class="dc" style="left:9.4px;top:50.5px">Status ...</div><div class="dc" style="left:74.0px;top:50.5px">14-03-2025 03:56 PM</div><div class="dc" style="left:192.8px;top:50.5px">Arjun</div><div class="dc" style="left:284.3px;top:50.5px">Meeting</div><div class="dc" style="left:376.5px;top:50.5px">Open</div><div class="dc" style="left:467.90000000000003px;top:50.5px">15-03-2025 03:59 PM</div><div class="dc" style="left:587.4px;top:50.5px">Meeting Done</div><div class="dc" style="left:678.5px;top:50.5px;letter-spacing:0.05px">Dongle picked up by executive from parent company and go to the client for replacement.</div><div class="drow" style="top:73.5px;height:23px"></div><div class="dc" style="left:9.4px;top:73.5px">Status ...</div><div class="dc" style="left:74.0px;top:73.5px">13-03-2025 03:54 PM</div><div class="dc" style="left:192.8px;top:73.5px">Arjun</div><div class="dc" style="left:284.3px;top:73.5px">Visit</div><div class="dc" style="left:376.5px;top:73.5px">Open</div><div class="dc" style="left:467.90000000000003px;top:73.5px">13-03-2025 03:59 PM</div><div class="dc" style="left:587.4px;top:73.5px">Meeting Fixed</div><div class="dc" style="left:678.5px;top:73.5px;letter-spacing:0.05px">Executive visited client sale and picked up dongle and told him that new dongle will be picked up after 7 days. Now dong...</div><div class="drow" style="top:96.5px;height:23px"></div><div class="dc" style="left:9.4px;top:96.5px">New</div><div class="dc" style="left:74.0px;top:96.5px">12-03-2025 03:51 PM</div><div class="dc" style="left:192.8px;top:96.5px">Arjun</div><div class="dc" style="left:284.3px;top:96.5px"></div><div class="dc" style="left:376.5px;top:96.5px">Open</div><div class="dc" style="left:467.90000000000003px;top:96.5px">13-03-2025 03:51 PM</div><div class="dc" style="left:587.4px;top:96.5px">New Entry</div><div class="dc" style="left:678.5px;top:96.5px;letter-spacing:0.05px">Told client that our executive will visit tom and it would be chargable 500 rs.</div><svg class="a" style="left:1394.6px;top:33.8px" width="9" height="11" viewBox="0 0 9 11"><rect x="0" y="0" width="8" height="1.1" fill="#f55"/><rect x="0.4" y="1.7" width="7.2" height="8.4" rx="1" fill="#f44545"/></svg></div>
</body></html>
